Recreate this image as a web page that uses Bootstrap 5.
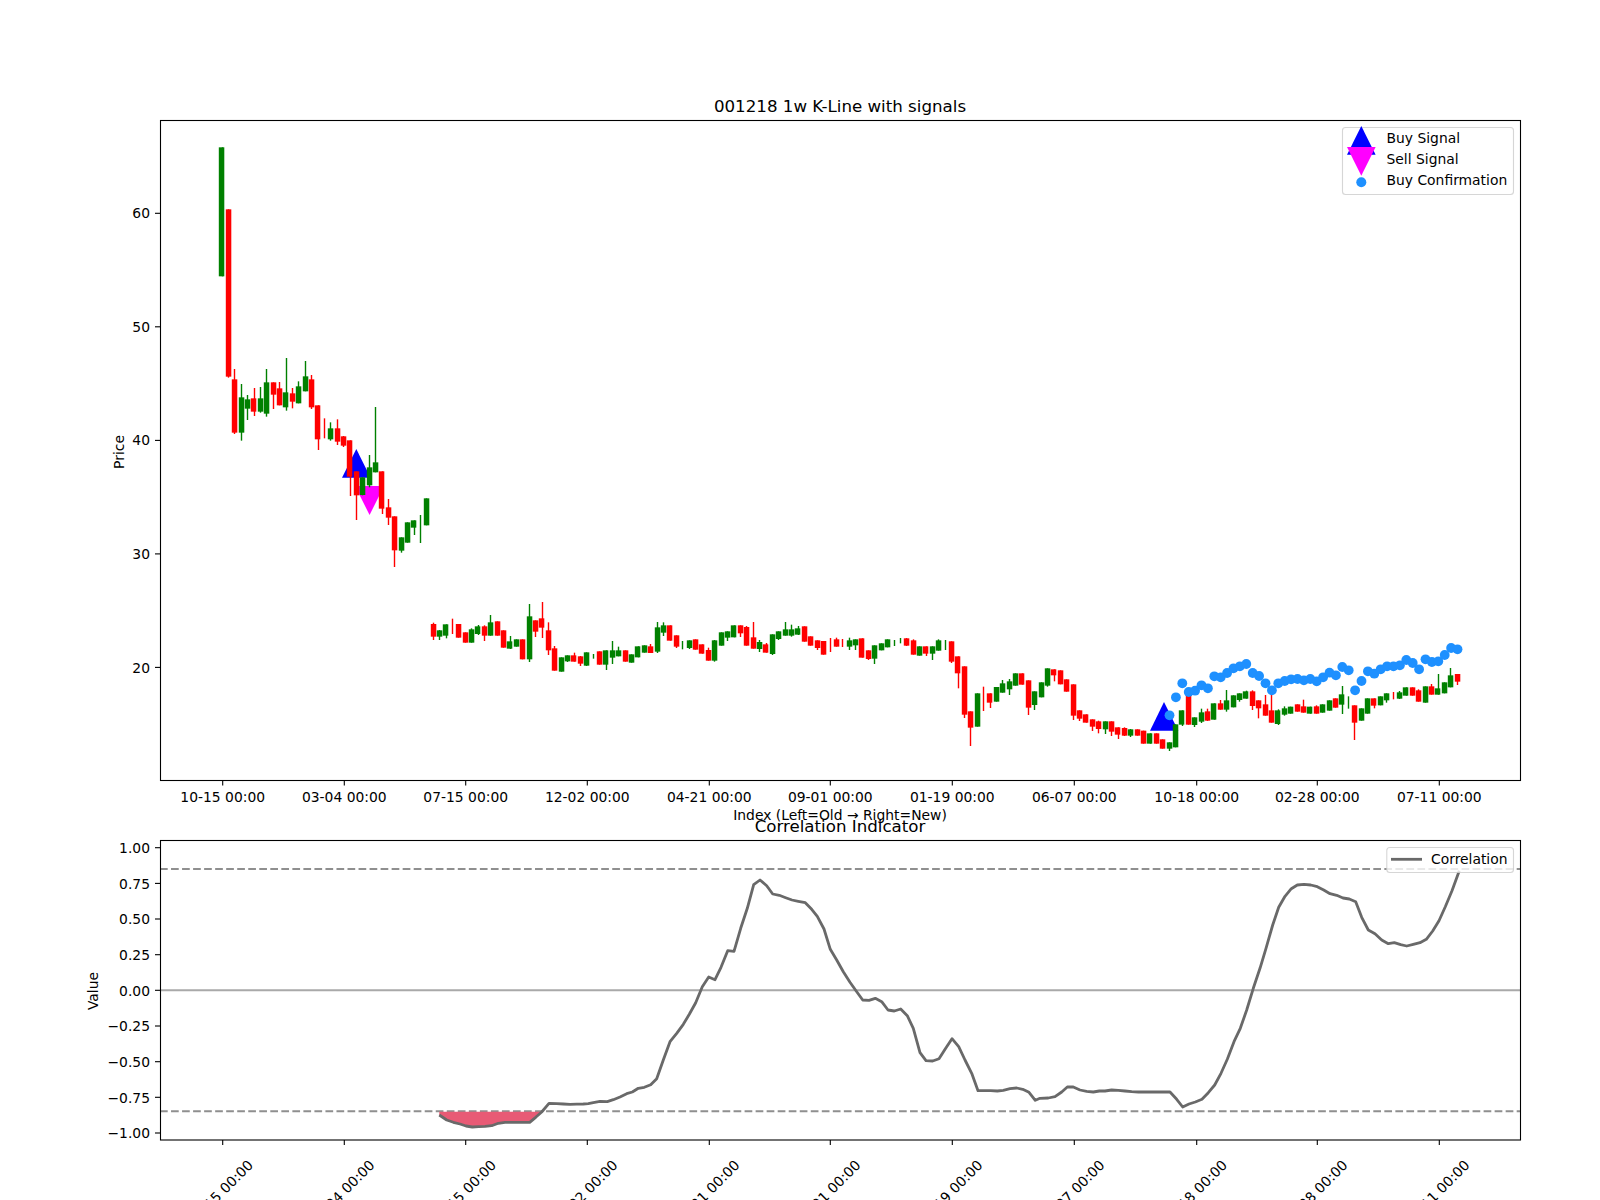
<!DOCTYPE html>
<html lang="en">
<head>
<meta charset="utf-8">
<title>001218 1w K-Line with signals</title>
<link href="https://cdn.jsdelivr.net/npm/bootstrap@5.3.0/dist/css/bootstrap.min.css" rel="stylesheet">
<style>
html,body{margin:0;background:#fff;}
.figure-wrap{width:1600px;height:1200px;overflow:hidden;}
.figure-wrap svg{display:block;}
.figure-wrap text{font-family:"DejaVu Sans",sans-serif;font-size:13.89px;fill:#000;}
.figure-wrap text.plot-title{font-size:16.67px;text-anchor:middle;}
.figure-wrap text.mid{text-anchor:middle;}
.figure-wrap text.end{text-anchor:end;}
.spine{fill:none;stroke:#000;stroke-width:1.1;}
.tick{stroke:#000;stroke-width:1.1;}
.legend-box{fill:#fff;fill-opacity:.8;stroke:#ccc;stroke-opacity:.8;stroke-width:1.1;}
.corr{fill:none;stroke:#696969;stroke-width:2.8;stroke-linejoin:round;}
.corr-fill{fill:#e85a75;}
.dash{stroke:#8f8f8f;stroke-width:2.1;stroke-dasharray:7.7 3.33;fill:none;}
.zero{stroke:#a9a9a9;stroke-width:2.1;fill:none;}
.dot{fill:#1e90ff;}
.buy{fill:#00f;}
.sell{fill:#f0f;}
.c-r{fill:#f00;stroke:#f00;}
.c-g{fill:#008000;stroke:#008000;}
</style>
</head>
<body>
<main class="figure-wrap bg-white">
<svg id="fig" xmlns="http://www.w3.org/2000/svg" width="1600" height="1200" viewBox="0 0 1600 1200">
  <g id="top-plot"></g>
  <g id="bottom-plot"></g>
  <g id="ticks"></g>
  <rect class="spine" x="160.5" y="120.5" width="1360" height="660"/>
  <rect class="spine" x="160.5" y="840.5" width="1360" height="299.5"/>

  <text class="plot-title" x="840" y="111.7">001218 1w K-Line with signals</text>
  <text class="plot-title" x="840" y="832">Correlation Indicator</text>
  <text class="mid" x="840" y="820">Index (Left=Old → Right=New)</text>
  <text class="mid" transform="translate(124,452) rotate(-90)">Price</text>
  <text class="mid" transform="translate(98,991) rotate(-90)">Value</text>

  <text class="end" x="150" y="218">60</text>
  <text class="end" x="150" y="332.1">50</text>
  <text class="end" x="150" y="445">40</text>
  <text class="end" x="150" y="559.2">30</text>
  <text class="end" x="150" y="672.7">20</text>

  <text class="end" x="150" y="853">1.00</text>
  <text class="end" x="150" y="888.7">0.75</text>
  <text class="end" x="150" y="924.4">0.50</text>
  <text class="end" x="150" y="960">0.25</text>
  <text class="end" x="150" y="995.7">0.00</text>
  <text class="end" x="150" y="1031.4">−0.25</text>
  <text class="end" x="150" y="1067">−0.50</text>
  <text class="end" x="150" y="1102.7">−0.75</text>
  <text class="end" x="150" y="1138.4">−1.00</text>

  <text class="mid" x="222.7" y="801.6">10-15 00:00</text>
  <text class="mid" x="344.3" y="801.6">03-04 00:00</text>
  <text class="mid" x="465.7" y="801.6">07-15 00:00</text>
  <text class="mid" x="587.3" y="801.6">12-02 00:00</text>
  <text class="mid" x="709.3" y="801.6">04-21 00:00</text>
  <text class="mid" x="830.3" y="801.6">09-01 00:00</text>
  <text class="mid" x="952.3" y="801.6">01-19 00:00</text>
  <text class="mid" x="1074.3" y="801.6">06-07 00:00</text>
  <text class="mid" x="1196.7" y="801.6">10-18 00:00</text>
  <text class="mid" x="1317.3" y="801.6">02-28 00:00</text>
  <text class="mid" x="1439.3" y="801.6">07-11 00:00</text>

  <text class="mid" transform="translate(224,1196) rotate(-45)">10-15 00:00</text>
  <text class="mid" transform="translate(345.6,1196) rotate(-45)">03-04 00:00</text>
  <text class="mid" transform="translate(467,1196) rotate(-45)">07-15 00:00</text>
  <text class="mid" transform="translate(588.6,1196) rotate(-45)">12-02 00:00</text>
  <text class="mid" transform="translate(710.6,1196) rotate(-45)">04-21 00:00</text>
  <text class="mid" transform="translate(831.6,1196) rotate(-45)">09-01 00:00</text>
  <text class="mid" transform="translate(953.6,1196) rotate(-45)">01-19 00:00</text>
  <text class="mid" transform="translate(1075.6,1196) rotate(-45)">06-07 00:00</text>
  <text class="mid" transform="translate(1198,1196) rotate(-45)">10-18 00:00</text>
  <text class="mid" transform="translate(1318.6,1196) rotate(-45)">02-28 00:00</text>
  <text class="mid" transform="translate(1440.6,1196) rotate(-45)">07-11 00:00</text>

  <rect class="legend-box" x="1342.5" y="127.5" width="171" height="67" rx="3"/>
  <polygon class="buy" points="1361.3,126 1347,154.7 1375.6,154.7"/>
  <polygon class="sell" points="1347,147 1375.6,147 1361.3,175.7"/>
  <circle class="dot" cx="1361.3" cy="182.3" r="5"/>
  <text x="1386.5" y="143.3">Buy Signal</text>
  <text x="1386.5" y="164.3">Sell Signal</text>
  <text x="1386.5" y="185.3">Buy Confirmation</text>

  <rect class="legend-box" x="1386.8" y="847.5" width="126.7" height="25" rx="3"/>
  <line x1="1391" y1="859.3" x2="1422" y2="859.3" stroke="#696969" stroke-width="2.8"/>
  <text x="1431" y="864">Correlation</text>
</svg>
</main>
<script>
(function(){
  var NS='http://www.w3.org/2000/svg';
  function el(parent,name,attrs){var e=document.createElementNS(NS,name);for(var k in attrs)e.setAttribute(k,attrs[k]);parent.appendChild(e);return e;}
  var top=document.getElementById('top-plot'),bot=document.getElementById('bottom-plot'),tk=document.getElementById('ticks');
  var X0=222.3,DX=6.4;
  function cx(i){return X0+DX*i;}

  // Signals lie under the candles
  el(top,'polygon',{'class':'buy',points:'356.3,449 342,477.7 370.6,477.7'});
  el(top,'polygon',{'class':'sell',points:'355,486 384,486 369.6,515'});
  el(top,'polygon',{'class':'buy',points:'1164,702 1150,730.7 1178.3,730.7'});

  // candles: colour wickTop bodyTop bodyBottom wickBottom, as crop coordinates (3x) with a y origin
  var segs=[
  [100,0,"g 142 142 529 529,r 328 328 830 833"],
  [350,2,"r 57 88 248 252,g 102 142 248 272,g 135 148 176 210,r 114 145 185 198,g 111 145 185 188,g 57 97 191 200,r 97 97 134 177,r 96 115 166 166,g 24 127 172 182,r 114 130 155 175,g 94 109 160 160,g 33 79 124 124,r 75 88 172 177,r 166 166 268 300,r 205 205 205 265,g 217 235 268 272,r 208 235 275 285,r 258 259 287 291,r 271 271 380 438,r 364 364 436 510,g 382 382 435 436,g 315 352 406 412,g 171 337 367 367,r 364 364 476 492,r 447 472 503 525,r 499 499 601 651,g 562 562 602 608,g 517 517 578 578,g 511 511 533 555,g 495 495 495 579,g 445 445 526 526"],
  [590,33,"r 98 102 140 150,g 120 121 140 150,g 103 103 137 145,r 86 86 86 132,r 102 102 143 143,r 127 127 158 158,g 115 118 158 158,g 105 109 132 135,r 106 109 137 153,g 75 97 137 137,r 94 94 137 137,r 121 121 173 173,g 138 154 176 177,g 148 148 170 170,r 148 148 208 208,g 42 79 208 216,r 91 91 125 141,r 36 85 113 144,r 97 121 181 195,r 168 175 242 242,g 202 202 245 245,g 196 196 214 216,r 188 196 215 215,r 198 199 221 228,g 187 187 227 228,g 192 192 192 206,r 184 184 224 224,g 181 181 224 240,g 153 181 203 222,g 170 181 199 199,r 181 181 215 215,g 193 193 218 218,g 169 169 202 202,g 166 166 188 188,r 162 169 189 189,g 96 112 185 189,g 97 106 128 138,r 106 106 152 152,r 136 136 170 174,g 153 153 153 178,g 151 151 174 177,r 148 148 179 179"],
  [590,75,"r 163 163 191 191,r 173 180 212 212,g 150 151 212 215,g 127 127 167 167,g 124 124 143 153,g 106 106 142 142,r 106 106 130 141,r 108 111 167 167,r 96 142 176 176,g 150 156 177 186,r 159 163 188 188,g 133 133 192 195,g 124 124 147 150,g 96 118 137 137,g 104 118 137 140,g 108 115 134 135,r 109 109 155 155,r 139 139 167 167,r 151 151 174 180,r 153 153 194 194,r 144 144 144 186,r 143 148 170 170,r 147 147 147 171,g 143 151 170 180,g 148 148 166 180,r 145 145 203 203,r 181 181 207 210,g 166 166 206 222,g 160 160 181 181,g 148 148 172 172,g 150 150 150 168,g 144 144 144 160,r 144 145 167 168,r 148 151 194 194,g 169 169 197 197,r 169 169 191 198,g 169 169 191 210,g 148 151 182 182,g 150 150 150 180,r 154 154 215 219,r 199 199 250 295,r 229 229 374 384"],
  [620,117,"r 274 274 323 378,g 220 220 320 320,r 200 200 200 273,r 220 220 248 264,g 201 201 245 245,g 180 190 218 218,g 177 184 208 225,g 160 160 197 197,r 160 160 194 194,r 181 181 263 285,g 214 214 255 270,g 187 187 232 232,g 145 145 197 200,r 148 148 166 184,r 151 151 193 193,r 178 178 215 215,r 193 193 287 300,r 271 271 296 303,r 283 283 308 308,r 298 298 320 333,r 302 304 327 340,g 304 304 328 342,r 304 304 335 348,r 322 322 344 357,r 322 324 347 348,g 327 328 347 351,r 328 328 347 347,r 332 332 371 371,g 340 340 371 371,r 340 340 371 371,r 358 358 386 386,g 367 367 386 393,g 313 313 382 382,g 271 271 314 318,r 220 220 314 314,g 292 292 315 321,g 266 277 305 309,r 266 274 302 303,g 250 250 299 299"],
  [620,156,"r 240 250 269 269,g 210 241 269 275,g 226 226 262 262,g 220 220 240 245,g 212 214 236 236,r 211 214 258 270,r 241 241 265 295,r 225 253 287 287,r 220 271 308 308,g 268 271 312 315,g 259 265 284 287,g 260 260 281 281,r 253 253 275 275,r 239 259 278 278,g 260 260 281 281,r 256 259 281 281,g 253 253 278 278,g 241 241 272 272,r 235 235 263 263,g 198 223 254 282,g 229 229 229 266,r 256 256 308 360,g 265 265 302 302,g 235 235 281 281,r 235 235 257 265,g 229 229 256 256,g 220 220 241 248,r 216 216 216 238,g 213 217 236 237,g 202 202 227 227,r 202 202 227 227,r 208 211 245 245,g 199 199 248 248,r 192 199 224 224,g 162 205 224 224,g 187 187 220 220,g 144 166 202 202,r 162 162 185 195"]
  ];
  segs.forEach(function(s){
    var oy=s[0],idx=s[1];
    s[2].split(',').forEach(function(row){
      var p=row.split(' '),c='c-'+p[0];
      var w0=oy+p[1]/3,b0=oy+p[2]/3,b1=oy+p[3]/3,w1=oy+p[4]/3,x=cx(idx)-.3;
      var lx=Math.round(x-.5)+.5;
      if(w1-w0>0.5) el(top,'line',{'class':c,x1:lx,x2:lx,y1:w0,y2:w1,'stroke-width':1.4});
      if(b1-b0>0.3){
        var left=Math.round(x-2.7)-.2;
        el(top,'rect',{'class':c,x:left,y:b0,width:5.5,height:b1-b0,'stroke-width':0});
      }
      idx++;
    });
  });

  // Buy confirmation dots
  [286,232,190,216,212,196,205,169,172,159,145,139,132,159,168,190,211,190,183,178,177,181,177,184,172,158,166,141,151,211,183,154,161,148,139,139,136,120,129,148,118,126,124,105,84,88].forEach(function(y,k){
    el(top,'circle',{'class':'dot',cx:cx(148+k),cy:620+y/3,r:4.9});
  });

  // Correlation reference lines
  el(bot,'line',{'class':'zero',x1:160,x2:1520,y1:990.3,y2:990.3});
  el(bot,'line',{'class':'dash',x1:160,x2:1520,y1:869,y2:869});
  el(bot,'line',{'class':'dash',x1:160,x2:1520,y1:1111.3,y2:1111.3});

  var a=[[1138,1005],[1160,1020],[1180,1027],[1200,1032],[1218,1038],[1237,1041],[1256,1040],[1275,1039],[1295,1037],[1315,1030],[1335,1027],[1355,1027],[1375,1027],[1409,1027],[1427,1012],[1445,996],[1467,970]];
  var b=[[20,971],[40,972],[60,973],[80,972.5],[100,972],[115,971],[130,968],[150,964],[172,965],[190,959],[210,951],[230,941],[247,936],[265,925],[283,922],[302,914],[320,896],[340,840],[360,785],[380,760],[400,733],[418,703],[437,668],[457,620],[476,591],[495,599],[513,562],[533,512],[552,514],[572,445],[592,385],[611,314],[630,300],[650,317],[668,342],[688,346],[707,353],[726,360],[745,364],[766,368],[785,388],[802,409],[822,447],[841,508],[860,540],[880,575],[900,607],[918,632],[938,660],[957,661],[976,655],[995,665],[1014,690],[1033,693],[1052,687],[1072,707],[1090,745],[1110,818],[1128,842],[1148,843],[1167,836],[1187,805],[1206,776],[1226,800],[1245,840],[1265,880],[1284,932],[1303,932],[1322,932],[1342,933],[1360,931],[1380,926],[1400,924],[1418,928],[1437,937],[1456,961]];
  var c=[[0,955],[25,954],[45,950],[65,936],[82,921],[100,921],[120,930],[140,934],[160,936],[178,933],[195,933],[215,930],[235,931],[255,933],[275,935],[295,936],[315,936],[335,936],[355,936],[390,936],[410,958],[428,981],[447,972],[466,966],[486,958],[505,938],[524,915],[543,880],[562,838],[582,785],[601,745],[620,690],[640,625],[660,565],[678,505],[698,435],[716,382],[735,349],[754,326],[772,315],[792,313],[812,315],[832,320],[851,330],[870,341],[890,346],[909,354],[928,357],[947,365],[965,412],[985,450],[1005,461],[1025,480],[1045,491],[1063,488],[1082,494],[1100,498],[1120,493],[1140,488],[1159,478],[1178,453],[1197,422],[1216,380],[1236,332],[1258,272]];
  function conv(list,ox){return list.map(function(p){return [(ox+p[0]/3).toFixed(1),(780+p[1]/3).toFixed(1)];});}
  var A=conv(a,60),pts=A.concat(conv(b,550),conv(c,1040));
  var fillPts=A.slice(0,16).map(function(p){return p.join(',');});
  fillPts.push('541.7,1111.8','439.3,1111.8');
  el(bot,'polygon',{'class':'corr-fill',points:fillPts.join(' ')});
  el(bot,'polyline',{'class':'corr',points:pts.map(function(p){return p.join(',');}).join(' ')});

  // Tick marks
  [222.7,344.3,465.7,587.3,709.3,830.3,952.3,1074.3,1196.7,1317.3,1439.3].forEach(function(x){
    el(tk,'line',{'class':'tick',x1:x,x2:x,y1:780.5,y2:785.5});
    el(tk,'line',{'class':'tick',x1:x,x2:x,y1:1140,y2:1145});
  });
  [213.3,326.8,440.4,553.9,667.4].forEach(function(y){el(tk,'line',{'class':'tick',x1:155,x2:160.5,y1:y,y2:y});});
  [847.7,883.4,919,954.7,990.3,1026,1061.7,1097.3,1133].forEach(function(y){el(tk,'line',{'class':'tick',x1:155,x2:160.5,y1:y,y2:y});});
})();
</script>
<script src="https://cdn.jsdelivr.net/npm/bootstrap@5.3.0/dist/js/bootstrap.bundle.min.js"></script>
</body>
</html>
